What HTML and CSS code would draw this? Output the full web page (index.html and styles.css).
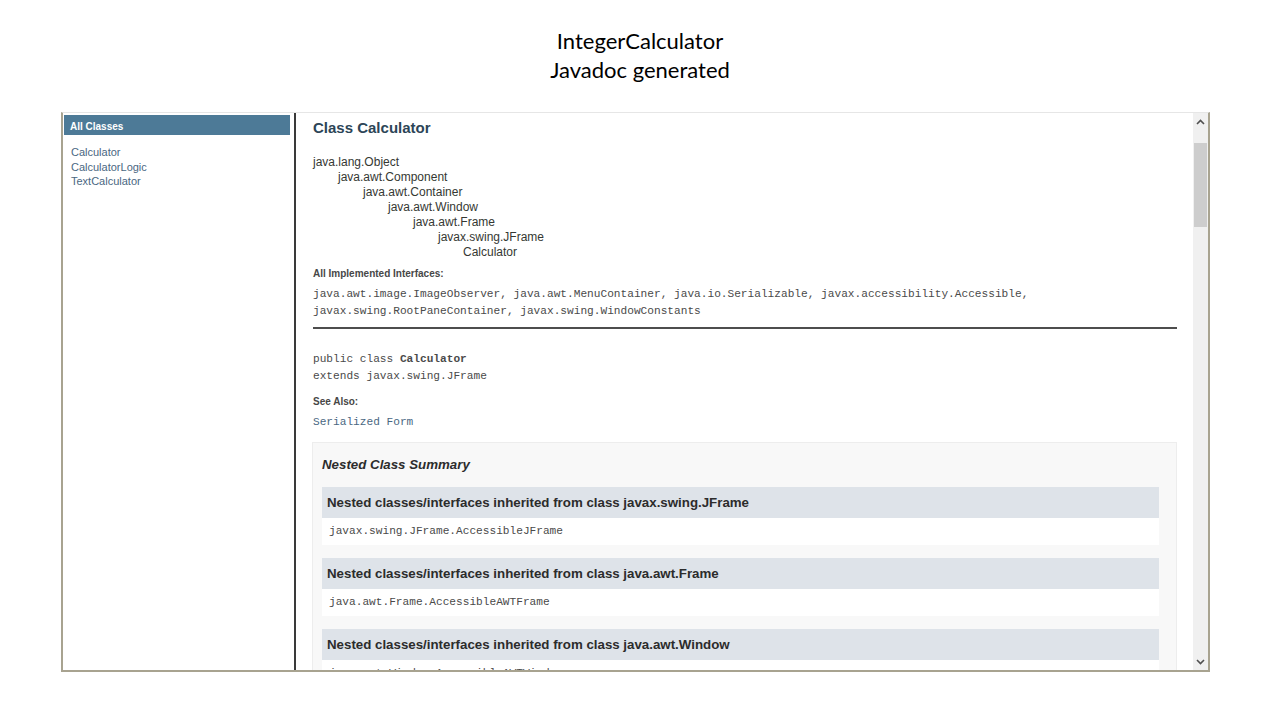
FILE: index.html
```html
<!DOCTYPE html>
<html>
<head>
<meta charset="utf-8">
<link rel="stylesheet" href="styles.css">
</head>
<body>
<div class="title">
  <div>IntegerCalculator</div>
  <div>Javadoc generated</div>
</div>
<div class="frame">
  <div class="left">
    <div class="bar">All Classes</div>
    <ul class="classes">
      <li>Calculator</li>
      <li>CalculatorLogic</li>
      <li>TextCalculator</li>
    </ul>
  </div>
  <div class="divider"></div>
  <div class="right">
    <div class="content">
      <h2 class="cls">Class Calculator</h2>
      <ul class="tree">
        <li>java.lang.Object
          <ul><li>java.awt.Component
            <ul><li>java.awt.Container
              <ul><li>java.awt.Window
                <ul><li>java.awt.Frame
                  <ul><li>javax.swing.JFrame
                    <ul><li>Calculator</li></ul>
                  </li></ul>
                </li></ul>
              </li></ul>
            </li></ul>
          </li></ul>
        </li>
      </ul>
      <div class="label lbl-impl">All Implemented Interfaces:</div>
      <div class="mono impl">java.awt.image.ImageObserver, java.awt.MenuContainer, java.io.Serializable, javax.accessibility.Accessible,<br>javax.swing.RootPaneContainer, javax.swing.WindowConstants</div>
      <div class="rule"></div>
      <div class="mono decl">public class <b>Calculator</b><br>extends javax.swing.JFrame</div>
      <div class="label lbl-see">See Also:</div>
      <div class="mono link">Serialized Form</div>
      <div class="summary">
        <h3 class="sumtitle">Nested Class Summary</h3>
        <div class="group">
          <div class="ghead">Nested classes/interfaces inherited from class javax.swing.JFrame</div>
          <div class="grow mono">javax.swing.JFrame.AccessibleJFrame</div>
        </div>
        <div class="group">
          <div class="ghead">Nested classes/interfaces inherited from class java.awt.Frame</div>
          <div class="grow mono">java.awt.Frame.AccessibleAWTFrame</div>
        </div>
        <div class="group">
          <div class="ghead">Nested classes/interfaces inherited from class java.awt.Window</div>
          <div class="grow mono">java.awt.Window.AccessibleAWTWindow</div>
        </div>
      </div>
    </div>
  </div>
  <div class="scrollbar">
    <div class="arrow">
      <svg width="9" height="6" viewBox="0 0 9 6"><path d="M1 5 L4.5 1.5 L8 5" fill="none" stroke="#505050" stroke-width="1.6"/></svg>
    </div>
    <div class="track"><div class="thumb"></div></div>
    <div class="arrow">
      <svg width="9" height="6" viewBox="0 0 9 6"><path d="M1 1 L4.5 4.5 L8 1" fill="none" stroke="#505050" stroke-width="1.6"/></svg>
    </div>
  </div>
</div>
</body>
</html>
```
FILE: styles.css
```css
html, body {
  margin: 0;
  padding: 0;
  background: #ffffff;
}
body {
  font-family: "Liberation Sans", Arial, sans-serif;
  color: #353833;
}
.title {
  font-family: Lato, "Open Sans", sans-serif;
  font-size: 22px;
  line-height: 29px;
  text-align: center;
  color: #000;
  padding-top: 26px;
  height: 86px;
}
.frame {
  margin-left: 61px;
  width: 1149px;
  height: 560px;
  box-sizing: border-box;
  border-left: 2px solid #a8a390;
  border-right: 2px solid #a8a390;
  border-bottom: 2px solid #a8a390;
  border-top: 1px solid #e6e6e6;
  display: flex;
  overflow: hidden;
}
.left {
  width: 231px;
  padding: 2px 0 0 1px;
  box-sizing: border-box;
  flex: none;
}
.bar {
  width: 226px;
  height: 20px;
  background: #4d7a97;
  color: #fff;
  font-weight: bold;
  font-size: 10px;
  line-height: 14px;
  padding: 5px 0 0 6px;
  box-sizing: border-box;
}
.classes {
  list-style: none;
  margin: 10px 0 0 0;
  padding: 0 0 0 7px;
  font-size: 11px;
  line-height: 14.5px;
  color: #4a6782;
}
.divider {
  width: 2px;
  background: #3a3a3a;
  flex: none;
}
.right {
  flex: 1;
  overflow: hidden;
}
.content {
  padding: 6px 16px 0 17px;
}
.cls {
  margin: 0;
  font-size: 15px;
  line-height: 18px;
  font-weight: bold;
  color: #2c4557;
}
.tree, .tree ul {
  list-style: none;
  margin: 0;
  padding: 0;
}
.tree {
  margin-top: 18px;
  font-size: 12px;
  line-height: 15px;
}
.tree ul {
  padding-left: 25px;
}
.label {
  font-size: 10px;
  line-height: 12px;
  font-weight: bold;
  color: #474747;
}
.lbl-impl {
  margin-top: 8px;
}
.mono {
  font-family: "Liberation Mono", "Courier New", monospace;
  font-size: 11.15px;
  line-height: 17px;
  color: #4a4a4a;
}
.impl {
  margin-top: 6px;
}
.rule {
  margin-top: 7px;
  height: 2px;
  background: #4d4d4d;
}
.decl {
  margin-top: 22px;
}
.lbl-see {
  margin-top: 11px;
}
.link {
  margin-top: 6px;
  color: #4a6782;
}
.summary {
  margin-top: 11px;
  margin-left: -1px;
  background: #f8f8f8;
  border: 1px solid #ededed;
  padding: 14px 17px 20px 9px;
}
.sumtitle {
  margin: 0;
  font-size: 13.3px;
  line-height: 16px;
  font-weight: bold;
  font-style: italic;
  color: #2c2c2c;
}
.group {
  margin-top: 13px;
}
.sumtitle + .group {
  margin-top: 14px;
}
.ghead {
  height: 31px;
  background: #dee3e9;
  font-size: 13.3px;
  line-height: 31px;
  font-weight: bold;
  color: #2c2c2c;
  padding-left: 5px;
}
.grow {
  height: 27px;
  background: #ffffff;
  line-height: 27px;
  padding-left: 7px;
}
.scrollbar {
  width: 15px;
  flex: none;
  background: #f0f0f0;
  display: flex;
  flex-direction: column;
}
.arrow {
  height: 17px;
  display: flex;
  align-items: center;
  justify-content: center;
  flex: none;
}
.track {
  flex: 1;
  padding: 13px 1px 0 1px;
}
.thumb {
  height: 84px;
  background: #cdcdcd;
}
```
